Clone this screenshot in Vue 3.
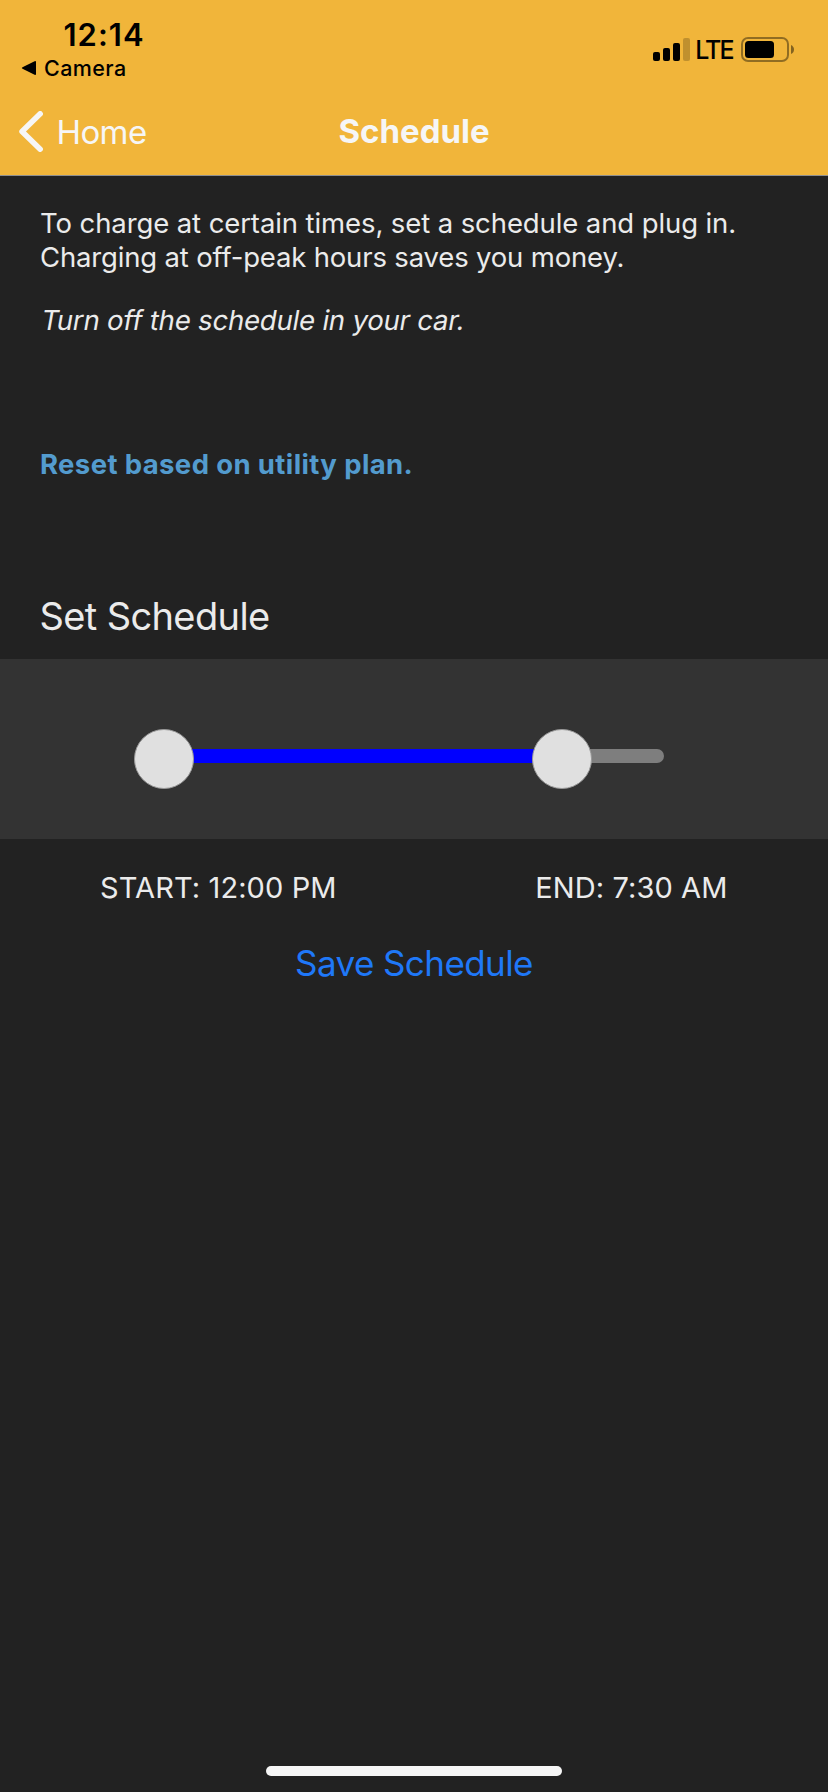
<script setup>
import { ref, computed } from 'vue'

const slider = ref({ min: 0, max: 500, start: 0, end: 398 })
const pct = (v) => `${((v - slider.value.min) / (slider.value.max - slider.value.min)) * 100}%`
const startPos = computed(() => pct(slider.value.start))
const endPos = computed(() => pct(slider.value.end))
const rangeStyle = computed(() => ({
  left: startPos.value,
  width: pct(slider.value.end - slider.value.start),
}))
</script>

<template>
  <main class="screen">
    <header class="header">
      <div class="status">
        <div class="status-left">
          <div class="time">12:14</div>
          <div class="return">
            <svg width="16" height="16" viewBox="0 0 16 16"><path d="M1.5 7.2 L13.6 1.2 Q15 .7 15 2 V14 Q15 15.3 13.6 14.8 L1.5 8.8 Q0 8 1.5 7.2Z" /></svg>
            <span>Camera</span>
          </div>
        </div>
        <div class="status-right">
          <svg class="signal" width="37" height="23" viewBox="0 0 37 23">
            <rect x="0" y="14" width="7" height="9" rx="2" />
            <rect x="10" y="10" width="7" height="13" rx="2" />
            <rect x="20" y="5" width="7" height="18" rx="2" />
            <rect x="30" y="0" width="7" height="23" rx="2" opacity=".2" />
          </svg>
          <span class="lte">LTE</span>
          <svg width="54" height="25" viewBox="0 0 54 25">
            <rect x="1" y="1" width="46" height="23" rx="6" fill="none" stroke="#000" stroke-width="2" opacity=".4" />
            <rect x="4" y="4" width="29" height="17" rx="3.5" />
            <path d="M50 8 Q53 9.5 53 12.5 Q53 15.5 50 17Z" opacity=".45" />
          </svg>
        </div>
      </div>
      <nav class="nav">
        <a class="back">
          <svg width="24" height="41" viewBox="0 0 24 41"><path d="M21.2 2.8 L3 20.5 L21.2 38.2" /></svg>
          <span>Home</span>
        </a>
        <h1 class="title">Schedule</h1>
      </nav>
    </header>

    <section class="intro">
      <p class="lead">To charge at certain times, set a schedule and plug in.</p>
      <p class="detail">Charging at off-peak hours saves you money.</p>
      <p class="note">Turn off the schedule in your car.</p>
      <a class="reset">Reset based on utility plan.</a>
      <h2 class="subtitle">Set Schedule</h2>
    </section>

    <section class="panel">
      <div class="track">
        <div class="range" :style="rangeStyle"></div>
        <div class="thumb" :style="{ left: startPos }"></div>
        <div class="thumb" :style="{ left: endPos }"></div>
      </div>
    </section>

    <div class="times">
      <span>START: 12:00 PM</span>
      <span>END: 7:30 AM</span>
    </div>
    <button class="save">Save Schedule</button>
    <div class="home-indicator"></div>
  </main>
</template>

<style>
body { margin: 0; background: #222; }
</style>

<style scoped>
.screen { box-sizing: border-box; width: 828px; height: 1792px; display: flex; flex-direction: column; background: #222; color: #ebebeb; font-family: Inter, "Liberation Sans", sans-serif; overflow: hidden; }
.header { height: 175px; background: #f1b53a; border-bottom: 1px solid #8f8f8f; }
.status { height: 88px; display: flex; justify-content: space-between; color: #000; }
.status-left { padding: 17px 0 0 21px; }
.time { margin-left: 42.5px; font-size: 31px; line-height: 36px; font-weight: 600; letter-spacing: 1px; }
.return { display: flex; align-items: center; margin-top: 1px; gap: 7px; font-size: 21.5px; line-height: 28px; font-weight: 500; letter-spacing: .4px; }
.status-right { display: flex; align-items: flex-start; padding: 37px 33px 0 0; }
.signal { margin-top: 1px; }
.lte { margin: 0 8.5px 0 5px; font-size: 25px; line-height: 26px; font-weight: 500; letter-spacing: -2px; }
.nav { height: 87px; display: grid; grid-template-columns: 1fr auto 1fr; align-items: center; color: #f6f6f6; }
.back { display: flex; align-items: center; gap: 13.5px; padding-left: 19px; font-size: 33px; line-height: 40px; letter-spacing: -.6px; }
.back path { fill: none; stroke: #f6f6f6; stroke-width: 5.5; stroke-linecap: round; stroke-linejoin: round; }
.title { margin: 0 0 2px; font-size: 33px; line-height: 40px; font-weight: 700; }
.intro { padding: 30px 0 20px 40px; font-size: 27.5px; line-height: 34px; white-space: nowrap; }
.intro p { margin: 0; }
.intro .lead { letter-spacing: -.1px; }
.intro .detail { letter-spacing: -.17px; }
/* Slanted upright letterforms, so the f keeps its short stem */
.intro .note { margin-top: 29px; letter-spacing: -.19px; transform: skewX(-10deg); transform-origin: 0 27px; }
.reset { display: block; margin-top: 110px; color: #539bce; font-weight: 700; letter-spacing: .38px; }
.subtitle { margin: 112px 0 0 -.5px; font-size: 38px; line-height: 46px; font-weight: 400; letter-spacing: -.62px; }
.panel { height: 180px; box-sizing: border-box; padding: 90px 164px 0; background: #333; }
.track { position: relative; height: 14px; border-radius: 7px; background: #7e7e7e; }
.range { position: absolute; top: 0; height: 14px; background: #00f; }
.thumb { position: absolute; top: -20px; box-sizing: border-box; width: 60px; height: 60px; margin-left: -30px; border: 1px solid #999; border-radius: 50%; background: #e0e0e0; }
.times { display: flex; justify-content: space-between; padding: 31px 100.5px 0 100px; font-size: 29px; line-height: 36px; letter-spacing: .1px; }
.save { align-self: center; margin-top: 35px; padding: 0; border: 0; background: none; color: #1f78f8; font: 400 35px/44px Inter, "Liberation Sans", sans-serif; letter-spacing: -.58px; }
.home-indicator { flex: none; width: 296px; height: 10px; margin: auto auto 16px; border-radius: 5px; background: #f6f6f6; }
</style>
